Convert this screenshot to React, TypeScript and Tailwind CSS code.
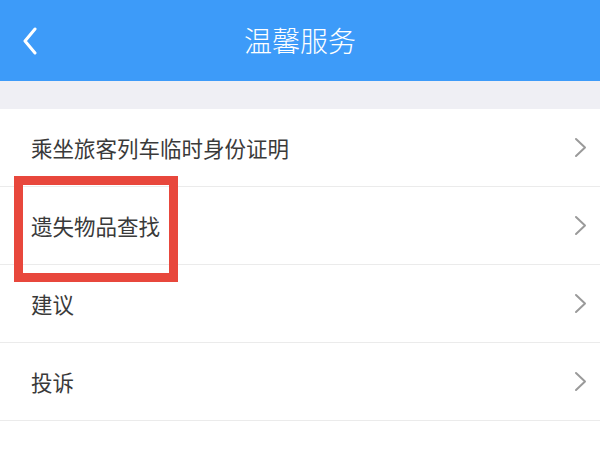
import { FC } from 'react';

const items = ['乘坐旅客列车临时身份证明', '遗失物品查找', '建议', '投诉'];

const font = { fontFamily: '"Noto Sans CJK SC", "Noto Sans", sans-serif' };

const ChevronRight: FC = () => (
  <svg width="13" height="21" viewBox="0 0 13 21" fill="none">
    <polyline points="2,2 11,10.5 2,19" stroke="#9a9a9a" strokeWidth="2" strokeLinecap="round" strokeLinejoin="round" />
  </svg>
);

const App: FC = () => {
  return (
    <div className="relative w-[600px] h-[449px] bg-white overflow-hidden" style={font}>
      <header className="flex items-center h-[81px] bg-[#3d9bf9]">
        <div className="w-[80px] pl-[22px] flex items-center">
          <svg width="16" height="28" viewBox="0 0 16 28" fill="none">
            <polyline points="13,2 3,14 13,26" stroke="#ffffff" strokeWidth="3" strokeLinecap="round" strokeLinejoin="round" />
          </svg>
        </div>
        <h1 className="flex-1 text-center text-white text-[28px] font-light leading-none pb-[2px]">温馨服务</h1>
        <div className="w-[80px]" />
      </header>
      <div className="h-[28px] bg-[#efeff4]" />
      <ul>
        {items.map((item) => (
          <li key={item} className="flex items-center justify-between h-[78px] pl-[31px] pr-[13px] border-b border-[#ebebeb]">
            <span className="text-[21.5px] text-[#3a3a3a] leading-none">{item}</span>
            <ChevronRight />
          </li>
        ))}
      </ul>
      {/* annotation box */}
      <div className="absolute left-[14px] top-[176px] w-[164px] h-[106px] border-[9px] border-[#e8473c]" />
    </div>
  );
};

export default App;
